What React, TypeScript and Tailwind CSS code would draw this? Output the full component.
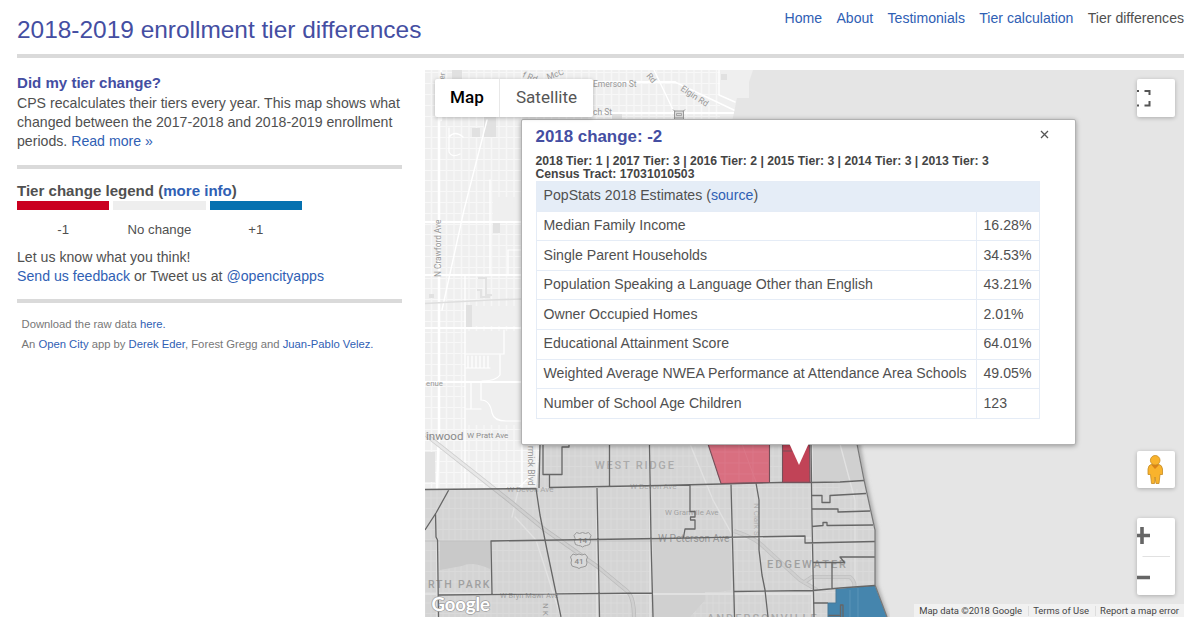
import React from 'react';

const navLinks = ['Home', 'About', 'Testimonials', 'Tier calculation'];

const stats: [string, string][] = [
  ['Median Family Income', '16.28%'],
  ['Single Parent Households', '34.53%'],
  ['Population Speaking a Language Other than English', '43.21%'],
  ['Owner Occupied Homes', '2.01%'],
  ['Educational Attainment Score', '64.01%'],
  ['Weighted Average NWEA Performance at Attendance Area Schools', '49.05%'],
  ['Number of School Age Children', '123'],
];

const legend = [
  { label: '-1', bar: 'bg-[#ca0020]' },
  { label: 'No change', bar: 'bg-[#eeeeee]' },
  { label: '+1', bar: 'bg-[#0571b0]' },
];

// Census tract outlines, in page coordinates
const tracts = [
  'M425 489.5L536 488.500L540 515L547 550L561 617',
  'M540 444L539 488',
  'M543 444V474.500H562V447H569V444',
  'M549.500 474V487.500L660 485.500L721 484L780 482.500L810 482.500L840 482L864 480.500',
  'M609.500 444V486',
  'M649.500 444L651 540L653 617',
  'M597 488L598 540L599.500 617',
  'M449 489.500L436 513L425 530M435.500 513L436 537L437.500 540L438.500 617',
  'M492 594L491 541L660 538.500L805 536V543L875 541.500',
  'M438 595L652 593',
  'M690 485V511.500H695V517H690.500V520H695V529H685L683.500 537.500',
  'M731 484L733 560L734.500 617',
  'M756 483L759 500V550L762 575L765 590L768 617',
  'M811 444L812 520L814 617',
  'M812 495.500H822V502.500H830V495.500L866 493.500',
  'M812 509H838V512L870 511',
  'M812 526.500L823 525.500V522.500H827V525.500L873 525',
  'M813 562.500H844.500L840 557L875 557',
  'M832 562V589',
  'M734 591.500L813 590.500L840 588L875 585.500',
  'M813 603H828',
  'M840.500 617V605H843V617M828 615.500H840',
];

function Label({ x, y, size = 9, rotate = 0, children, color = '#999', weight = 400, spacing = 0 }: {
  x: number; y: number; size?: number; rotate?: number; children: string; color?: string; weight?: number; spacing?: number;
}) {
  return (
    <text x={x} y={y} fontSize={size} fontWeight={weight} letterSpacing={spacing} fill={color}
      transform={rotate ? `rotate(${rotate} ${x} ${y})` : undefined}>{children}</text>
  );
}

function Shield({ x, y, n }: { x: number; y: number; n: string }) {
  return (
    <g>
      <path d={`M${x - 6} ${y - 7}q3 2 6 0q3 2 6 0l2.500 3q-2 3 -.5 6q0 4 -4 4q-2 0 -4 1.500q-2 -1.500 -4 -1.500q-4 0 -4 -4q1.500 -3 -.5 -6z`}
        fill="#d9d9d9" stroke="#999" strokeWidth="1" />
      <text x={x} y={y + 3} fontSize="8" textAnchor="middle" fill="#8a8a8a" fontWeight="500">{n}</text>
    </g>
  );
}

function MapCanvas() {
  return (
    <svg className="block h-[547px] w-[759px]" viewBox="425 70 759 547" fontFamily="Roboto, sans-serif">
      <defs>
        <pattern id="blocks" width="30" height="54" x="427" y="72" patternUnits="userSpaceOnUse">
          <path d="M0 .5H30M0 11.500H30M0 22.500H30M0 33.500H30M0 44.500H30" stroke="#f8f8f8" strokeWidth="1.100" />
          <path d="M4.500 0V54M12 0V54M19.500 0V54M27 0V54" stroke="#f7f7f7" strokeWidth="1.200" />
        </pattern>
        <pattern id="fine" width="24" height="42" x="427" y="445" patternUnits="userSpaceOnUse">
          <path d="M0 .5H24M0 11H24M0 21.500H24M0 32H24M4 0V42M10 0V42M16 0V42M22 0V42" stroke="#f8f8f8" strokeWidth=".9" />
        </pattern>
        <clipPath id="land">
          <path d="M425 70H753L749 82V98L737 98L732 122L857 444L864 480L875 530V585L887 617H425Z" />
        </clipPath>
        <filter id="shore"><feGaussianBlur stdDeviation="2" /></filter>
      </defs>
      <rect x="425" y="70" width="759" height="547" fill="#e5e5e5" />
      <path d="M857 440L864 480L875 530V585L887 620" fill="none" stroke="#999" strokeWidth="4" filter="url(#shore)" />
      <g clipPath="url(#land)">
        <rect x="425" y="70" width="465" height="547" fill="#efefef" />
        <rect x="425" y="70" width="295" height="274" fill="url(#blocks)" />
        <rect x="425" y="344" width="40" height="144" fill="url(#blocks)" />
        <rect x="465" y="425" width="75" height="64" fill="url(#blocks)" />
        <rect x="425" y="489" width="465" height="128" fill="url(#fine)" />
        <rect x="540" y="444" width="300" height="45" fill="url(#fine)" />
        <path d="M466 306H522V326H466zM466 331H522V354H466zM493 197H522V222H493z" fill="#efefef" />
        <path d="M452 70h10v18h-10zM484 117h12v20h-12zM472 128h8v9h-8zM493 222h7v11h-7zM466 305h6v22h-6zM429 294h5v4h-5zM425 452h10v30h-10zM440 541h50v28q-18 -8 -28 -3l-22 4zM721 74h6v6h-6zM612 112h10v8h-10z" fill="#e1e1e1" />
        <path d="M653 540L731 538V590L718 592L705 592V600L690 617H653Z" fill="#e9e9e9" />
        <path d="M811 444H857L864 480L811 482Z" fill="#e9e9e9" />
        <path d="M737 98H752V122H734Z" fill="#e3e3e3" />
        <path d="M478 278h8v17h5M477 290h4v7h9M486 296l6-1" fill="none" stroke="#e2e2e2" strokeWidth="2" />
        <g fill="none" stroke="#fff" strokeLinecap="round">
          <path d="M425 222H522M425 275H522M425 328H522M425 382H522M590 82H675M590 113H735" strokeWidth="1.800" />
          <path d="M439 118V430L437 488M441 70V120" strokeWidth="2.500" />
          <path d="M465 275V488M490 180V275M522 444V488M449 128V152Q452 158 460 154M449 137Q455 130 463 137" strokeWidth="1.300" />
          <path d="M487 120L464 210L442 310M654 70L675 114M675 82L738 112M719 70V95L735 102" strokeWidth="1.400" />
          <path d="M504 330V354H466M468 356v12M472 356v12M476 356v12M480 356v12M484 356v12M488 356v12M466 368H490M500 355V375Q496 381 482 381M481 382V400Q490 400 492 413Q494 421 506 421H522M466 409H481M471 383V408M508 275V250H522" strokeWidth="1.200" />
          <path d="M650 444V617M597 488V617M812 444V617M437 540V617M651 538H812M425 594H813" strokeWidth="1.800" />
          <path d="M515 517L536 540L561 617M512 517L519 487L532 475M690 444L713 500L734 538M840 444L855 500V585" strokeWidth="1.400" />
        </g>
        <path d="M425 303.500L490 300L522 299" fill="none" stroke="#dedede" strokeWidth="1.500" />
        <path d="M425 541H660" fill="none" stroke="#d6d6d6" strokeWidth="1" />
        <g fill="none" strokeLinejoin="round">
          <path d="M425 434L511 502L544 529L598 567L627 591Q634 597 634 617" stroke="#cfcfcf" strokeWidth="4.200" />
          <path d="M425 434L511 502L544 529L598 567L627 591Q634 597 634 617" stroke="#e8e8e8" strokeWidth="2.600" />
          <path d="M734 531Q756 538 765 548L800 580L817 590M803 583L812 577H850Q859 585 850 594L842 604" stroke="#d6d6d6" strokeWidth="4" />
          <path d="M734 531Q756 538 765 548L800 580L817 590M803 583L812 577H850Q859 585 850 594L842 604" stroke="#e8e8e8" strokeWidth="2.400" />
        </g>
        <path d="M425 489H536L540 444H857L864 480L875 530V585L887 617H425Z" fill="#777" fillOpacity=".22" />
      </g>

      <path d="M708 444H769.500V482.500L721 483.500Z" fill="#d96f80" />
      <path d="M782.500 444H809.500L810 482.500H782.500Z" fill="#c14357" />
      <path d="M712 452H768M714 463H768M717 474H768M725 444V482M739 444V482M753 444V482M742 444L756 482" fill="none" stroke="#dc7a8a" strokeWidth=".8" />
      <path d="M836 589L875 585.500L887 617H828V603H836Z" fill="#4585ad" />
      <path d="M850 590V617M858 588V617" stroke="#5b94b8" strokeWidth="1" />

      <Label x={441} y={277} rotate={-90} size={8.300}>N Crawford Ave</Label>
      <Label x={444} y={80} rotate={-80} size={8}>er</Label>
      <Label x={522} y={77} rotate={20} size={8.500}>f Rd</Label>
      <Label x={548} y={80} rotate={-20} size={8.500}>McC</Label>
      <Label x={593} y={87} size={8.500}>Emerson St</Label>
      <Label x={593} y={115} size={8.500}>ch St</Label>
      <Label x={646} y={76} rotate={50} size={8.500}>Rd</Label>
      <Label x={680} y={90} rotate={33} size={8.700}>Elgin Rd</Label>
      <g stroke="#999" fill="#ddd">
        <rect x="674.500" y="111" width="9" height="7" />
        <path d="M673 109.500l2 2M685 109.500l-2 2M673 120l2-2M685 120l-2-2" />
        <path d="M676.500 113.500h5v2h-5z" fill="none" strokeWidth=".8" />
      </g>
      <Label x={426} y={385.500} size={7.800}>enue</Label>
      <Label x={426} y={440} size={11.500} color="#8a8a8a">inwood</Label>
      <Label x={467} y={438} size={8} color="#8d8d8d">W Pratt Ave</Label>
      <Label x={527.500} y={446} rotate={90} size={8.500}>rmick Blvd</Label>
      <Label x={595} y={469} size={11} spacing={1.800} color="#ababab" weight={500}>WEST RIDGE</Label>
      <Label x={507} y={491.500} size={8} color="#a8a8a8">W Devon Ave</Label>
      <Label x={630} y={489} size={8} color="#a8a8a8">W Devon Ave</Label>
      <Label x={665} y={514.500} size={7.800} color="#a2a2a2">W Granville Ave</Label>
      <Label x={658} y={541.500} size={10.200} color="#979797">W Peterson Ave</Label>
      <Label x={767} y={567.500} size={11} spacing={2} color="#a0a0a0" weight={500}>EDGEWATER</Label>
      <Label x={428} y={588} size={10.500} spacing={1.800} color="#a0a0a0" weight={500}>RTH PARK</Label>
      <Label x={500} y={598} size={7.500} color="#a0a0a0">W Bryn Mawr Ave</Label>
      <Label x={543} y={603} rotate={90} size={8}>N K</Label>
      <Label x={754} y={503} rotate={90} size={8} color="#b0b0b0">N Clark St</Label>
      <Label x={707} y={622} size={11} spacing={2} color="#aaa" weight={500}>ANDERSONVILLE</Label>
      <Shield x={582.500} y={539.500} n="14" />
      <Shield x={579} y={561} n="41" />

      <path d={tracts.join('')} fill="none" stroke="#666" strokeWidth="1.300" strokeLinejoin="round" />
      <path d="M708 444L721 483.500L769.500 482.500V444M782.500 444V482.500H810L809.500 444M783 451H792" fill="none" stroke="#76505a" strokeWidth="1.100" />
      <path d="M857 444L864 480L875 530V585L887 617" fill="none" stroke="#777" strokeWidth="1.200" />
      <path d="M828 617V603H836V589" fill="none" stroke="#4b7895" strokeWidth="1" />

      <text x="431.500" y="610.500" fontFamily="Lato, sans-serif" fontSize="18.500" textLength="58.500" fontWeight="700" fill="#fff"
        stroke="#a0a0a0" strokeWidth="1.500" paintOrder="stroke">Google</text>
    </svg>
  );
}

function InfoWindow() {
  return (
    <div className="absolute left-[96px] top-[49px] h-[326px] w-[555px] rounded-[2px] border border-[#b2b2b2] bg-white pl-[13.500px] pt-[7px] text-[#444] shadow-[0_1px_5px_rgba(0,0,0,0.35)]">
      <h3 className="text-[16.900px] font-bold leading-5 text-[#444ea2]">2018 change: -2</h3>
      <p className="mt-[8px] text-[12.220px] font-bold leading-[13px]">
        2018 Tier: 1 | 2017 Tier: 3 | 2016 Tier: 2 | 2015 Tier: 3 | 2014 Tier: 3 | 2013 Tier: 3
        <br />
        Census Tract: 17031010503
      </p>
      <div className="w-[504px] border border-[#e5ecf6] text-[14.120px] leading-[18px] tracking-[0.015px] text-[#505050]">
        <div className="flex h-[28.600px] items-center bg-[#e5edf7] px-[7px] pb-[2px]">
          PopStats 2018 Estimates (<a className="text-[#2f60b4]">source</a>)
        </div>
        {stats.map(([name, value]) => (
          <div key={name} className="flex h-[29.640px] border-t border-[#e5ecf6]">
            <span className="flex w-[440px] items-center whitespace-nowrap border-r border-[#e5ecf6] px-[7px] pb-[2px]">{name}</span>
            <span className="flex items-center px-[7px] pb-[2px]">{value}</span>
          </div>
        ))}
      </div>
      <svg className="absolute right-[26px] top-[10px] size-[9px]" viewBox="0 0 9 9" stroke="#555" strokeWidth="1.300">
        <path d="M1 1L8 8M8 1L1 8" />
      </svg>
      <svg className="absolute left-[265px] top-[323px] h-[24px] w-[24px]" viewBox="0 0 24 24">
        <path d="M2.500 1H21.500L12 22Z" fill="#fff" />
      </svg>
    </div>
  );
}

function MapControls() {
  const panel = 'absolute left-[712px] w-[38px] rounded-[2px] bg-white shadow-[0_1px_4px_rgba(0,0,0,0.25)]';
  return (
    <>
      <div className="absolute left-[10px] top-[9px] flex h-[38px] items-center rounded-[2px] bg-white font-[Roboto] text-[17.100px] leading-none shadow-[0_1px_4px_rgba(0,0,0,0.25)]">
        <span className="flex h-full w-[65px] items-center justify-center border-r border-[#e8e8e8] font-medium text-black">Map</span>
        <span className="flex h-full w-[93px] items-center justify-center text-[#565656]">Satellite</span>
      </div>
      <div className={`${panel} top-[9px] h-[38px]`}>
        <svg className="size-full" viewBox="0 0 38 38" fill="none" stroke="#555" strokeWidth="2">
          <path d="M0 12H2M7.500 12H12.500V16M12.500 22V26.500H7.500M0 26.500H2" />
        </svg>
      </div>
      <div className={`${panel} top-[381px] h-[37px]`}>
        <svg className="size-full" viewBox="0 0 38 37" stroke="#c58a22" strokeWidth=".8" fill="#f9b32c">
          <path d="M14 13.500Q11.500 14 11 18V23.500H13.500L14.500 32.500H17.500L18 26L19 32.500H22L23 23.500H25.500V18Q25 14 22 13.500Z" />
          <path d="M14.500 14L18 18L22 14Z" fill="#d98218" stroke="none" />
          <circle cx="18.200" cy="9.300" r="4.800" />
        </svg>
      </div>
      <div className={`${panel} top-[448px] h-[77px]`}>
        <svg className="size-full" viewBox="0 0 38 77" stroke="#666" strokeWidth="3.600" fill="none">
          <path d="M0 17.500H13M5 9V26M0 59.500H13" />
          <path d="M5.500 38.500H33" stroke="#e1e1e1" strokeWidth="1" />
        </svg>
      </div>
      <div className="absolute bottom-0 right-0 flex h-[13px] items-center bg-[#f1f1f1] pt-px font-[Roboto] text-[9.460px] leading-none text-[#444]">
        <span className="pl-[5px] pr-[6px]">Map data ©2018 Google</span>
        <span className="border-l border-[#ddd] pl-[4px] pr-[6px]">Terms of Use</span>
        <span className="border-l border-[#ddd] pl-[4px] pr-[5px]">Report a map error</span>
      </div>
    </>
  );
}

function Sidebar() {
  const link = 'text-[#2f60b4]';
  return (
    <aside className="w-[385px] pt-[4px] text-[14.140px] leading-[19.200px]">
      <h2 className="text-[15.070px] font-bold leading-[18px] text-[#444ea2]">Did my tier change?</h2>
      <p className="mt-[2px] whitespace-nowrap">
        CPS recalculates their tiers every year. This map shows what
        <br />
        changed between the 2017-2018 and 2018-2019 enrollment
        <br />
        periods. <a className={link}>Read more »</a>
      </p>
      <hr className="mt-[13.400px] h-[4px] border-0 bg-[#dadada]" />
      <h3 className="mt-[12px] text-[15.070px] font-bold leading-5">
        Tier change legend (<a className={link}>more info</a>)
      </h3>
      <div className="flex gap-[4px]">
        {legend.map((item) => (
          <div key={item.label} className="w-[92.300px] text-center text-[13.200px]">
            <div className={`h-[9px] ${item.bar}`} />
            <div className="mt-[9.500px]">{item.label}</div>
          </div>
        ))}
      </div>
      <p className="mt-[9px]">
        Let us know what you think!
        <br />
        <a className={link}>Send us feedback</a> or Tweet us at <a className={link}>@opencityapps</a>
      </p>
      <hr className="mt-[13px] h-[4px] border-0 bg-[#dadada]" />
      <footer className="mt-[10.500px] whitespace-nowrap pl-[4.500px] text-[11.270px] leading-[20px] text-[#777]">
        <p>Download the raw data <a className={link}>here.</a></p>
        <p>
          An <a className={link}>Open City</a> app by <a className={link}>Derek Eder</a>, Forest Gregg and <a className={link}>Juan-Pablo Velez.</a>
        </p>
      </footer>
    </aside>
  );
}

export default function App() {
  return (
    <div className="h-[636px] w-[1200px] overflow-hidden bg-white pl-[17px] pr-4 font-['Liberation_Sans',sans-serif] text-[#505050]">
      <header className="flex h-[54px] items-start justify-between">
        <h1 className="pt-[15px] text-[24.440px] leading-[30px] text-[#444ea2]">2018-2019 enrollment tier differences</h1>
        <nav className="flex gap-[14.300px] whitespace-nowrap pt-[9px] text-[14.080px] leading-[18px]">
          {navLinks.map((item) => <a key={item} className="text-[#2f60b4]">{item}</a>)}
          <span>Tier differences</span>
        </nav>
      </header>
      <hr className="h-[4px] border-0 bg-[#dadada]" />
      <main className="mt-[12px] flex justify-between">
        <Sidebar />
        <section className="relative h-[547px] w-[759px]">
          <MapCanvas />
          <InfoWindow />
          <MapControls />
        </section>
      </main>
    </div>
  );
}
